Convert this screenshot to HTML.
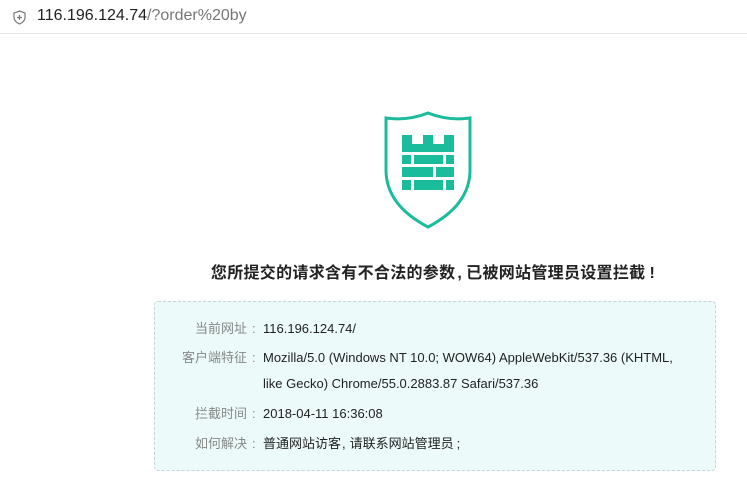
<!DOCTYPE html>
<html><head><meta charset="utf-8"><style>
body{margin:0;width:747px;height:490px;background:#fff;font-family:"Liberation Sans","Noto Sans CJK SC",sans-serif;position:relative;overflow:hidden}
.bar{position:absolute;left:0;top:0;width:747px;height:33px;border-bottom:1px solid #e6e6e6}
.url{position:absolute;left:37px;top:7px;font-size:16px;color:#222}
.url span{color:#777}
h1{position:absolute;left:0;width:866px;top:259px;margin:0;text-align:center;font-size:16px;font-weight:bold;color:#222;letter-spacing:0.3px}
.box{position:absolute;left:154px;top:301px;width:560px;height:168px;border:1px dashed #c8d4d4;border-radius:4px;background:#ecfafa}
.r{position:absolute;font-size:13px;line-height:16px;color:#222;left:108px}
.l{position:absolute;font-size:13px;line-height:16px;color:#888;right:468px;text-align:right;white-space:nowrap}
.c{position:absolute;font-size:13px;line-height:16px;color:#888;left:97px}
</style></head><body>
<div class="bar">
<svg style="position:absolute;left:13px;top:10px" width="13" height="15" viewBox="0 0 13 15"><path d="M6.5 1 L12 3 V7.5 Q12 11.5 6.5 14 Q1 11.5 1 7.5 V3 Z" fill="none" stroke="#777" stroke-width="1.2"/><path d="M6.5 5v5M4 7.5h5" stroke="#777" stroke-width="1.2"/></svg>
<div class="url">116.196.124.74<span>/?order%20by</span></div>
</div>
<svg style="position:absolute;left:0;top:0" width="747" height="300">
<path d="M386,118 Q408,121 428,113 Q448,121 470,118 L470,170 Q470,205 428,227 Q386,205 386,170 Z" fill="none" stroke="#1abc9c" stroke-width="3"/>
<g fill="#1abc9c">
<rect x="402" y="135" width="10" height="10"/><rect x="423" y="135" width="10" height="10"/><rect x="444" y="135" width="10" height="10"/>
<rect x="402" y="144" width="52" height="8"/>
<rect x="402" y="155" width="9" height="9"/><rect x="414" y="155" width="29" height="9"/><rect x="446" y="155" width="8" height="9"/>
<rect x="402" y="167" width="31" height="10"/><rect x="436" y="167" width="18" height="10"/>
<rect x="402" y="180" width="9" height="10"/><rect x="414" y="180" width="29" height="10"/><rect x="446" y="180" width="8" height="10"/>
</g></svg>
<h1>您所提交的请求含有不合法的参数<span style="margin:0 4px 0 2px">,</span>已被网站管理员设置拦截<span style="margin-left:4px">!</span></h1>
<div class="box">
<div class="l" style="top:19px">当前网址</div><div class="c" style="top:19px">:</div><div class="r" style="top:19px">116.196.124.74/</div>
<div class="l" style="top:48px">客户端特征</div><div class="c" style="top:48px">:</div><div class="r" style="top:48px">Mozilla/5.0 (Windows NT 10.0; WOW64) AppleWebKit/537.36 (KHTML,</div>
<div class="r" style="top:74px">like Gecko) Chrome/55.0.2883.87 Safari/537.36</div>
<div class="l" style="top:104px">拦截时间</div><div class="c" style="top:104px">:</div><div class="r" style="top:104px">2018-04-11 16:36:08</div>
<div class="l" style="top:134px">如何解决</div><div class="c" style="top:134px">:</div><div class="r" style="top:134px">普通网站访客<span style="margin:0 4px 0 1px">,</span>请联系网站管理员<span style="margin-left:3px">;</span></div>
</div>
</body></html>
